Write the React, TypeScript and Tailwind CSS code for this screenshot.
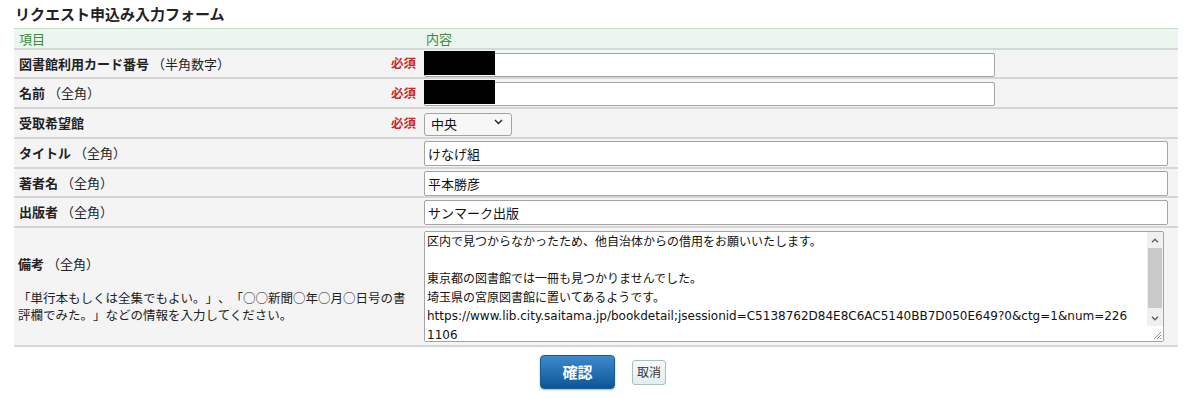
import React from 'react';

const remarks =
  '区内で見つからなかったため、他自治体からの借用をお願いいたします。\n\n東京都の図書館では一冊も見つかりませんでした。\n埼玉県の宮原図書館に置いてあるようです。\nhttps://www.lib.city.saitama.jp/bookdetail;jsessionid=C5138762D84E8C6AC5140BB7D050E649?0&ctg=1&num=226\n1106';

const Required = () => (
  <span className="mr-[4px] text-[12.5px] font-bold text-[#c8262b]">必須</span>
);

const Label = ({ main, sub }: { main: string; sub?: string }) => (
  <span className="text-[13px] leading-[16px] text-[#222]">
    <span className="font-bold">{main}</span>
    {sub && <span> {sub}</span>}
  </span>
);

const TextField = ({ value, wide, redacted }: { value?: string; wide?: boolean; redacted?: boolean }) => (
  <div className="relative">
    <input
      type="text"
      defaultValue={value}
      className={`${wide ? 'w-[744px] h-[25px]' : 'w-[571px] h-[24px]'} rounded-[2px] border border-[#a3a3a3] bg-white px-[3px] text-[13px] text-[#111] font-['Open_Sans','Noto_Sans_CJK_JP',sans-serif] outline-none`}
    />
    {redacted && <div className="absolute left-0 top-0 h-[24px] w-[71px] bg-black" />}
  </div>
);

// drawn scrollbar for the remarks box
const ScrollBar = () => (
  <div className="flex w-[16px] flex-col bg-[#f0f0f0]">
    <div className="flex h-[16px] items-center justify-center">
      <svg width="8" height="5" viewBox="0 0 8 5">
        <path d="M1 4.2L4 1.2l3 3" fill="none" stroke="#606060" strokeWidth="1.4" />
      </svg>
    </div>
    <div className="mx-[1px] h-[60px] bg-[#c9c9c9]" />
    <div className="flex-1" />
    <div className="flex h-[16px] items-center justify-center">
      <svg width="8" height="5" viewBox="0 0 8 5">
        <path d="M1 0.8L4 3.8l3-3" fill="none" stroke="#606060" strokeWidth="1.4" />
      </svg>
    </div>
    <div className="flex h-[15px] items-end justify-end bg-white pb-[1px] pr-[1px]">
      <svg width="10" height="10" viewBox="0 0 10 10">
        <path d="M9 2L2 9M9 5L5 9M9 8L8 9" stroke="#8a8a8a" strokeWidth="1" />
      </svg>
    </div>
  </div>
);

type Row = { main: string; sub?: string; required?: boolean; h: string; field: React.ReactNode };

const rows: Row[] = [
  { main: '図書館利用カード番号', sub: '（半角数字）', required: true, h: 'h-[29px]', field: <TextField redacted /> },
  { main: '名前', sub: '（全角）', required: true, h: 'h-[30px]', field: <TextField redacted /> },
  {
    main: '受取希望館',
    required: true,
    h: 'h-[30px]',
    field: (
      <div className="relative w-[88px]">
        <select className="h-[23px] w-[88px] appearance-none rounded-[3px] border border-[#a3a3a3] bg-[#f7f7f7] pl-[6px] text-[13px] text-[#111] font-['Noto_Sans_CJK_JP',sans-serif] outline-none">
          <option>中央</option>
        </select>
        <svg className="pointer-events-none absolute right-[9px] top-[9px]" width="9" height="6" viewBox="0 0 9 6">
          <path d="M1 1l3.5 3.5L8 1" fill="none" stroke="#222" strokeWidth="1.4" />
        </svg>
      </div>
    ),
  },
  { main: 'タイトル', sub: '（全角）', h: 'h-[30px]', field: <TextField value="けなげ組" wide /> },
  { main: '著者名', sub: '（全角）', h: 'h-[29px]', field: <TextField value="平本勝彦" wide /> },
  { main: '出版者', sub: '（全角）', h: 'h-[30px]', field: <TextField value="サンマーク出版" wide /> },
];

export default function App() {
  return (
    <div className="h-[398px] w-[1200px] bg-white font-['Noto_Sans_CJK_JP',sans-serif] [text-spacing-trim:space-all]">
      <h2 className="h-[28px] pl-[15px] pt-[4px] text-[15px] font-bold leading-[20px] text-[#222]">
        リクエスト申込み入力フォーム
      </h2>

      <div className="ml-[14px] w-[1164px]">
        {/* header */}
        <div className="flex h-[22px] items-center border-t border-b-2 border-t-[#c6dccb] border-b-[#cfdcd2] bg-[#eaf6ee] text-[13px] text-[#3f8a3f]">
          <div className="w-[406px] pl-[5px]">項目</div>
          <div className="pl-[6px]">内容</div>
        </div>

        {rows.map((r) => (
          <div key={r.main} className={`flex ${r.h} items-center border-b-2 border-[#d6d6d6] bg-[#f4f4f4]`}>
            <div className="flex w-[406px] items-center justify-between pl-[5px]">
              <Label main={r.main} sub={r.sub} />
              {r.required && <Required />}
            </div>
            <div className="pl-[4px]">{r.field}</div>
          </div>
        ))}

        {/* remarks */}
        <div className="flex h-[119px] items-center border-b-2 border-[#d6d6d6] bg-[#f4f4f4]">
          <div className="w-[406px] pl-[4px] pr-[8px]">
            <Label main="備考" sub="（全角）" />
            <p className="mt-[15px] text-[12.5px] leading-[17px] text-[#222]">
              「単行本もしくは全集でもよい。」、「○○新聞○年○月○日号の書
              <br />
              評欄でみた。」などの情報を入力してください。
            </p>
          </div>
          <div className="pl-[4px]">
            <div className="flex h-[111px] w-[740px] rounded-[2px] border border-[#a3a3a3] bg-white">
              <textarea
                defaultValue={remarks}
                className="block h-full flex-1 resize-none overflow-hidden bg-white px-[2px] py-[1px] text-[12px] leading-[18.6px] text-[#111] font-['DejaVu_Sans','Noto_Sans_CJK_JP',sans-serif] outline-none"
              />
              <ScrollBar />
            </div>
          </div>
        </div>
      </div>

      <div className="flex items-center justify-center gap-[17px] pl-[6px] pt-[8px]">
        <button className="h-[34px] w-[75px] rounded-[4px] border border-[#1a5a96] bg-gradient-to-b from-[#3d8bcc] to-[#0b5698] text-[15px] font-bold text-white shadow-[0_1px_2px_rgba(0,0,0,0.3)]">
          確認
        </button>
        <button className="h-[25px] w-[34px] rounded-[3px] border border-[#a8bfc0] bg-gradient-to-b from-[#f6fafa] to-[#e4eeee] text-[12px] text-[#333]">
          取消
        </button>
      </div>
    </div>
  );
}
